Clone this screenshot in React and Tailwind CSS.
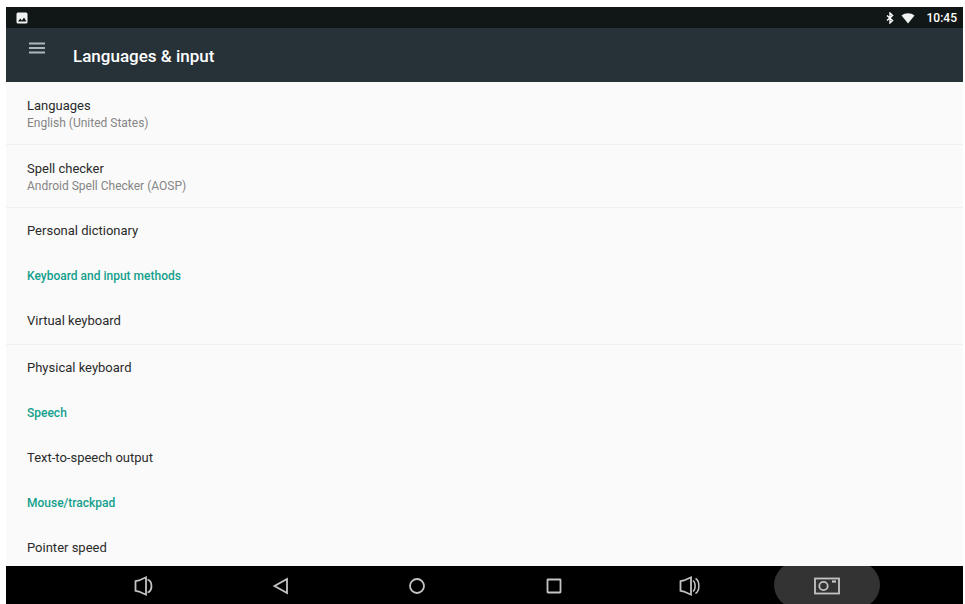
import { Fragment } from 'react'

const sections = [
    {
        items: [
            { title: 'Languages', summary: 'English (United States)' },
            { title: 'Spell checker', summary: 'Android Spell Checker (AOSP)' },
            { title: 'Personal dictionary' }
        ]
    },
    {
        heading: 'Keyboard and input methods',
        items: [{ title: 'Virtual keyboard' }, { title: 'Physical keyboard' }]
    },
    {
        heading: 'Speech',
        items: [{ title: 'Text-to-speech output' }]
    },
    {
        heading: 'Mouse/trackpad',
        items: [{ title: 'Pointer speed' }]
    }
]

const navItems = [
    {
        label: 'Volume down',
        icon: (
            <>
                <path d="M3.500 7.200L7 6.500l7-3.200v17.400l-7-3.200-3.500-0.700z" />
                <path d="M15.500 5.500c5.300 1.500 5.300 11.500 0 13" />
            </>
        )
    },
    { label: 'Back', icon: <path d="M18 5v14L5.500 12z" /> },
    { label: 'Home', icon: <circle cx="12" cy="12" r="7" /> },
    { label: 'Recent apps', icon: <rect x="5.500" y="5.500" width="13" height="13" rx="0.500" /> },
    {
        label: 'Volume up',
        icon: (
            <>
                <path d="M2.500 7.200L6 6.500l7-3.200v17.400l-7-3.200-3.500-0.700z" />
                <path strokeWidth="1.5" d="M15 6.500c2.800 2 2.800 9 0 11M17.500 4.500c4.500 2.500 4.500 12.500 0 15" />
            </>
        )
    },
    {
        label: 'Screenshot',
        active: true,
        icon: (
            <>
                <rect x="0" y="4.500" width="24" height="15" />
                <circle cx="8.500" cy="12" r="4.200" />
                <path strokeWidth="2.200" d="M17 7.500h4" />
            </>
        )
    }
]

function StatusBar() {
    return (
        <div className="flex h-[21px] items-center bg-[#111717] pl-2.5 pr-1.5 text-white">
            {/* Picture notification */}
            <svg viewBox="0 0 12 12" className="h-3 w-3" aria-hidden="true">
                <rect x="0.5" y="0.5" width="11" height="11" rx="1.5" fill="#f1f3f3" />
                <path d="M2 9.500l2.300-3 1.600 1.900L8 5.500l2.500 4z" fill="#111717" />
            </svg>
            <div className="ml-auto flex items-center">
                <svg viewBox="0 0 10 14" className="h-3 w-2.5" fill="none" stroke="currentColor" strokeWidth="1.6" aria-hidden="true">
                    <path d="M1.500 4l6.500 6-3 2.800V1.200L8 4l-6.500 6" />
                </svg>
                <svg viewBox="0 0 14 12" className="ml-1.5 h-3 w-3.5" aria-hidden="true">
                    <path d="M0.500 3.500C4.200 0.500 9.800 0.500 13.500 3.500L7 11.500z" fill="#f1f3f3" />
                </svg>
                <span className="ml-3 text-xs font-medium">10:45</span>
            </div>
        </div>
    )
}

function AppBar() {
    return (
        <header className="flex h-[54px] bg-[#263238] px-[22px]">
            <button type="button" aria-label="Open menu" className="mt-3 h-4 w-[18px] text-[#aeb6b9]">
                <svg viewBox="0 0 18 16" className="h-4 w-[18px]" fill="none" stroke="currentColor" strokeWidth="2" aria-hidden="true">
                    <path d="M1 3.500h16M1 8h16M1 12.500h16" />
                </svg>
            </button>
            <h1 className="ml-[27px] mt-4 text-[17px] leading-6 font-medium text-white">Languages &amp; input</h1>
        </header>
    )
}

function SettingRow({ title, summary, divided }) {
    return (
        <li className={divided ? 'border-t border-[#f0f0f0]' : ''}>
            <a
                href="#"
                className={`flex flex-col justify-center px-[21px] text-[13px] leading-[18px] text-[#2b2b2b] ${summary ? 'h-[62px] pt-0.5' : 'h-[46px]'}`}
            >
                {title}
                {summary && <span className="text-xs leading-4 text-[#858585]">{summary}</span>}
            </a>
        </li>
    )
}

function NavBar() {
    return (
        <nav className="flex h-[38px] shrink-0 justify-around overflow-hidden bg-black pl-[70px] pr-[68px]">
            {navItems.map((item) => (
                <button
                    key={item.label}
                    type="button"
                    aria-label={item.label}
                    className={`-my-1 flex w-[106px] items-center justify-center rounded-full pt-0.5 ${item.active ? 'bg-[#333333]' : ''}`}
                >
                    <svg
                        viewBox="-1 0 26 24"
                        className="h-6 w-[26px] text-[#c4c4c4]"
                        fill="none"
                        stroke="currentColor"
                        strokeWidth="1.8"
                        aria-hidden="true"
                    >
                        {item.icon}
                    </svg>
                </button>
            ))}
        </nav>
    )
}

export default function App() {
    return (
        <div className="flex h-screen flex-col bg-white pl-1.5 pr-0.5 pt-[7px] font-['Roboto',sans-serif]">
            <StatusBar />
            <AppBar />

            <main className="min-h-0 flex-1 overflow-hidden bg-[#fafafa]">
                {sections.map((section, index) => (
                    <Fragment key={index}>
                        {section.heading && (
                            <h2 className="flex h-11 items-center px-[21px] text-xs font-medium text-[#12a08c]">
                                {section.heading}
                            </h2>
                        )}
                        <ul>
                            {section.items.map((item, i) => (
                                <SettingRow key={item.title} {...item} divided={i > 0} />
                            ))}
                        </ul>
                    </Fragment>
                ))}
            </main>

            <NavBar />
        </div>
    )
}
